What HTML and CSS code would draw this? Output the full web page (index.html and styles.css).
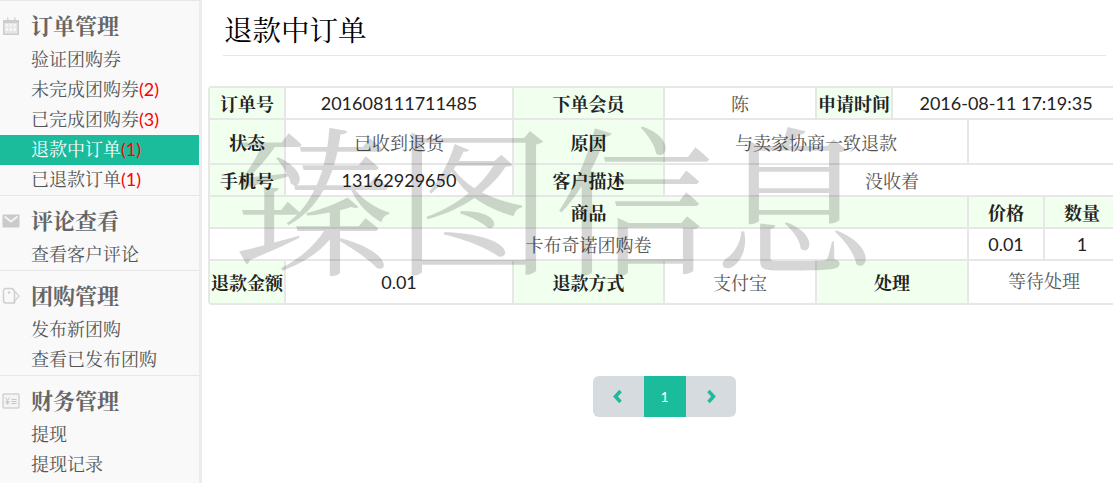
FILE: index.html
```html
<!DOCTYPE html>
<html lang="zh-CN">
<head>
<meta charset="utf-8">
<title>退款中订单</title>
<link rel="stylesheet" href="styles.css">
</head>
<body>
<div class="layout">
  <aside class="sidebar">
    <section class="group">
      <h3 class="group-title"><svg class="ico" viewBox="0 0 18 18"><path d="M1 3h16v15H1z" fill="#cdcdcd"/><path d="M5 0.500h1.500v3H5zM12 0.500h1.500v3H12z" fill="#d4d4d4"/><path d="M2.500 6h13v10.500h-13z" fill="#e6e6e6"/><path d="M3.500 7h2.500v2.500H3.500zM7.500 7H10v2.500H7.500zM11.500 7H14v2.500h-2.500zM3.500 11h2.500v3H3.500zM7.500 11H10v3H7.500zM11.500 11H14v3h-2.500z" fill="#f6f6f6"/></svg>订单管理</h3>
      <a class="link">验证团购券</a>
      <a class="link">未完成团购券<span class="count">(2)</span></a>
      <a class="link">已完成团购券<span class="count">(3)</span></a>
      <a class="link active">退款中订单<span class="count">(1)</span></a>
      <a class="link">已退款订单<span class="count">(1)</span></a>
    </section>
    <section class="group">
      <h3 class="group-title"><svg class="ico" viewBox="0 0 18 18"><rect x="0.500" y="2.500" width="17" height="13" rx="1" fill="#cacaca"/><path d="M2.500 4.500L9 9.500l6.500-5" fill="none" stroke="#f4f4f4" stroke-width="1.800"/></svg>评论查看</h3>
      <a class="link">查看客户评论</a>
    </section>
    <section class="group">
      <h3 class="group-title"><svg class="ico" viewBox="0 0 18 18"><path d="M10 1.500l7 7.500-6 7" fill="none" stroke="#d8d8d8" stroke-width="1.500"/><path d="M4 1.500h5a3.500 3.500 0 0 1 3.500 3.500v11H4a2.500 2.500 0 0 1-2.500-2.500V4A2.500 2.500 0 0 1 4 1.500z" fill="none" stroke="#cfcfcf" stroke-width="1.500"/><circle cx="7" cy="5.500" r="1.200" fill="#cfcfcf"/></svg>团购管理</h3>
      <a class="link">发布新团购</a>
      <a class="link">查看已发布团购</a>
    </section>
    <section class="group">
      <h3 class="group-title"><svg class="ico" viewBox="0 0 18 18"><rect x="1" y="2" width="16" height="14" rx="1" fill="#f4f4f4" stroke="#d2d2d2" stroke-width="1.500"/><path d="M3.500 5.500l2 3 2-3M5.500 8.500v4M3.500 9.500h4M3.500 11h4M9.500 7.500h5M9.500 9.500h5M9.500 11.500h5" fill="none" stroke="#c6c6c6"/></svg>财务管理</h3>
      <a class="link">提现</a>
      <a class="link">提现记录</a>
    </section>
  </aside>
  <main class="content">
    <h1 class="page-title">退款中订单</h1>
    <table class="detail">
      <colgroup><col class="c1"><col class="c2"><col class="c3"><col class="c4"><col class="c5"><col class="c6"><col class="c7"><col class="c8"></colgroup>
      <tr class="row">
        <th>订单号</th><td class="dark">201608111711485</td><th>下单会员</th><td>陈</td><th>申请时间</th><td colspan="3" class="dark">2016-08-11 17:19:35</td>
      </tr>
      <tr class="row-tall">
        <th>状态</th><td>已收到退货</td><th>原因</th><td colspan="3">与卖家协商一致退款</td><td colspan="2"></td>
      </tr>
      <tr class="row">
        <th>手机号</th><td class="dark">13162929650</td><th>客户描述</th><td colspan="5">没收着</td>
      </tr>
      <tr class="row">
        <th colspan="6">商品</th><th>价格</th><th>数量</th>
      </tr>
      <tr class="row">
        <td colspan="6">卡布奇诺团购卷</td><td class="dark">0.01</td><td class="dark">1</td>
      </tr>
      <tr class="row-last">
        <th>退款金额</th><td class="dark">0.01</td><th>退款方式</th><td>支付宝</td><th colspan="2">处理</th><td colspan="2" class="up">等待处理</td>
      </tr>
    </table>
    <nav class="pager">
      <a class="page-arrow"><svg viewBox="0 0 11 15" class="chev"><path d="M8.500 2L3.500 7.500l5 5.500" fill="none" stroke="#1abc9c" stroke-width="3.500"/></svg></a>
      <a class="page-num">1</a>
      <a class="page-arrow"><svg viewBox="0 0 11 15" class="chev"><path d="M2.500 2l5 5.500-5 5.500" fill="none" stroke="#1abc9c" stroke-width="3.500"/></svg></a>
    </nav>
  </main>
</div>
<div class="watermark">臻图信息</div>
</body>
</html>
```
FILE: styles.css
```css
* { box-sizing: border-box; }
html, body { margin: 0; height: 483px; overflow: hidden; background: #fff; }
body { font-family: Lato, "Noto Serif CJK SC", "Noto Sans CJK SC", serif; color: #34495e; font-size: 18px; position: relative; }
.layout { display: flex; height: 483px; }
.sidebar { width: 202px; flex: none; background: #f9f9f9; border-right: 3px solid #ececec; border-top: 1px solid #e7e7e7; }
.group { border-bottom: 1px solid #e7e7e7; }
.group:last-child { border-bottom: 0; }
.group-title { display: flex; align-items: center; margin: 0; padding: 6px 0 0 2px; height: 44px; font-size: 22px; line-height: 38px; color: #666; font-weight: 700; }
.ico { width: 18px; height: 18px; margin-right: 11px; flex: none; }
.link { display: block; height: 30px; line-height: 29px; padding-left: 31px; font-size: 18px; color: #555; }
.link.active { background: #1abc9c; color: #fff; }
.count { color: #f00; }
.content { flex: 1; min-width: 0; padding: 0 0 0 6px; overflow: hidden; }
.page-title { margin: 0 0 30px 15px; width: 883px; height: 56px; padding-left: 1px; line-height: 60px; font-size: 28.500px; font-weight: 400; color: #000; border-bottom: 1px solid #e7e7e7; }
.detail { width: 913px; table-layout: fixed; border-collapse: separate; border-spacing: 0; border-top: 2px solid #e7e7e7; border-left: 2px solid #e7e7e7; border-radius: 4px; font-size: 18px; text-align: center; }
.c1 { width: 76px; } .c2 { width: 228px; } .c3 { width: 151px; } .c4 { width: 152px; }
.c5, .c6, .c7, .c8 { width: 76px; }
.detail th, .detail td { border-right: 2px solid #e7e7e7; border-bottom: 2px solid #e7e7e7; padding: 0; text-align: center; white-space: nowrap; }
.detail th { background: #f0ffee; font-weight: 700; color: #222; }
.detail td { background: #fff; color: #555; }
.detail td.dark { color: #222; }
.row { height: 32px; }
.row-tall { height: 45px; }
.row-last { height: 44px; }
.detail td.up { vertical-align: top; padding-top: 6px; }
.pager { display: flex; width: 143px; height: 41px; margin: 71px 0 0 385px; border-radius: 6px; overflow: hidden; background: #d6dbdf; }
.page-arrow { flex: 1; display: flex; align-items: center; justify-content: center; }
.page-num { width: 42px; flex: none; margin: 0 1px; background: #1abc9c; color: #fff; display: flex; align-items: center; justify-content: center; font-size: 14px; }
.chev { width: 11px; height: 15px; }
.watermark { position: absolute; left: 234px; top: 106px; font-size: 160px; line-height: 190px; color: rgba(0, 0, 0, .16); white-space: nowrap; pointer-events: none; }
```
